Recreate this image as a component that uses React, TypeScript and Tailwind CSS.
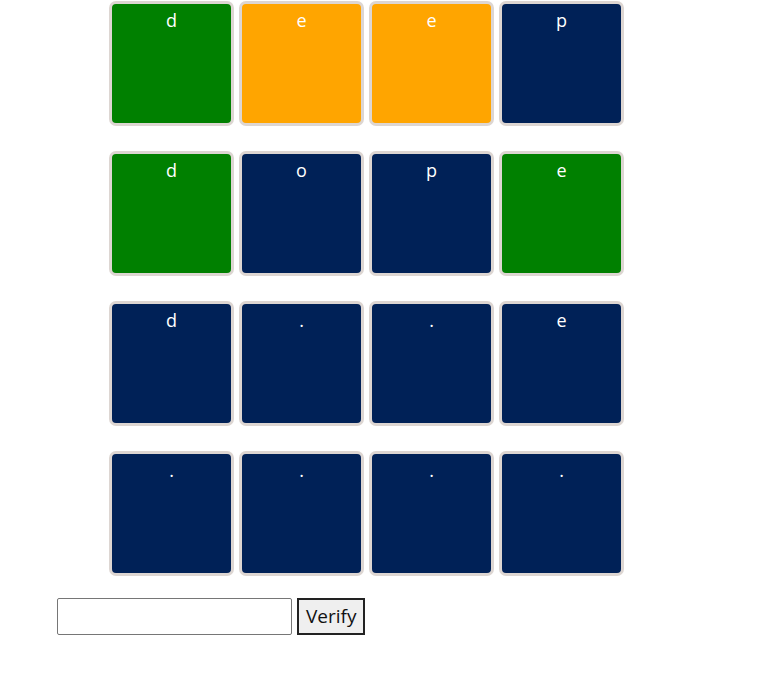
const rows: { ch: string; c: string }[][] = [
  [
    { ch: 'd', c: 'g' },
    { ch: 'e', c: 'o' },
    { ch: 'e', c: 'o' },
    { ch: 'p', c: 'n' },
  ],
  [
    { ch: 'd', c: 'g' },
    { ch: 'o', c: 'n' },
    { ch: 'p', c: 'n' },
    { ch: 'e', c: 'g' },
  ],
  [
    { ch: 'd', c: 'n' },
    { ch: '.', c: 'n' },
    { ch: '.', c: 'n' },
    { ch: 'e', c: 'n' },
  ],
  [
    { ch: '.', c: 'n' },
    { ch: '.', c: 'n' },
    { ch: '.', c: 'n' },
    { ch: '.', c: 'n' },
  ],
];

const bg: Record<string, string> = {
  g: 'bg-[#008000]',
  o: 'bg-[#ffa500]',
  n: 'bg-[#002157]',
};

export default function App() {
  return (
    <div className="w-[762px] h-[699px] bg-white font-['Open_Sans',sans-serif]">
      <div className="flex flex-col gap-[25px] pt-[1px] pl-[109px]">
        {rows.map((row, i) => (
          <div key={i} className="flex gap-[5px]">
            {row.map((t, j) => (
              <div
                key={j}
                className={`w-[125px] h-[125px] rounded-[7px] border-[3px] border-[#ddd6d2] ${bg[t.c]} text-white text-[18px] leading-[24px] text-center pt-[4px]`}
              >
                {t.ch}
              </div>
            ))}
          </div>
        ))}
      </div>
      <div className="flex gap-[5px] pl-[57px] mt-[22px]">
        <input className="w-[235px] h-[37px] border border-[#767676] rounded-[2px]" />
        <button className="h-[37px] px-[7px] border-2 border-[#222] bg-[#efefef] text-[19px] text-[#111]">
          Verify
        </button>
      </div>
    </div>
  );
}
